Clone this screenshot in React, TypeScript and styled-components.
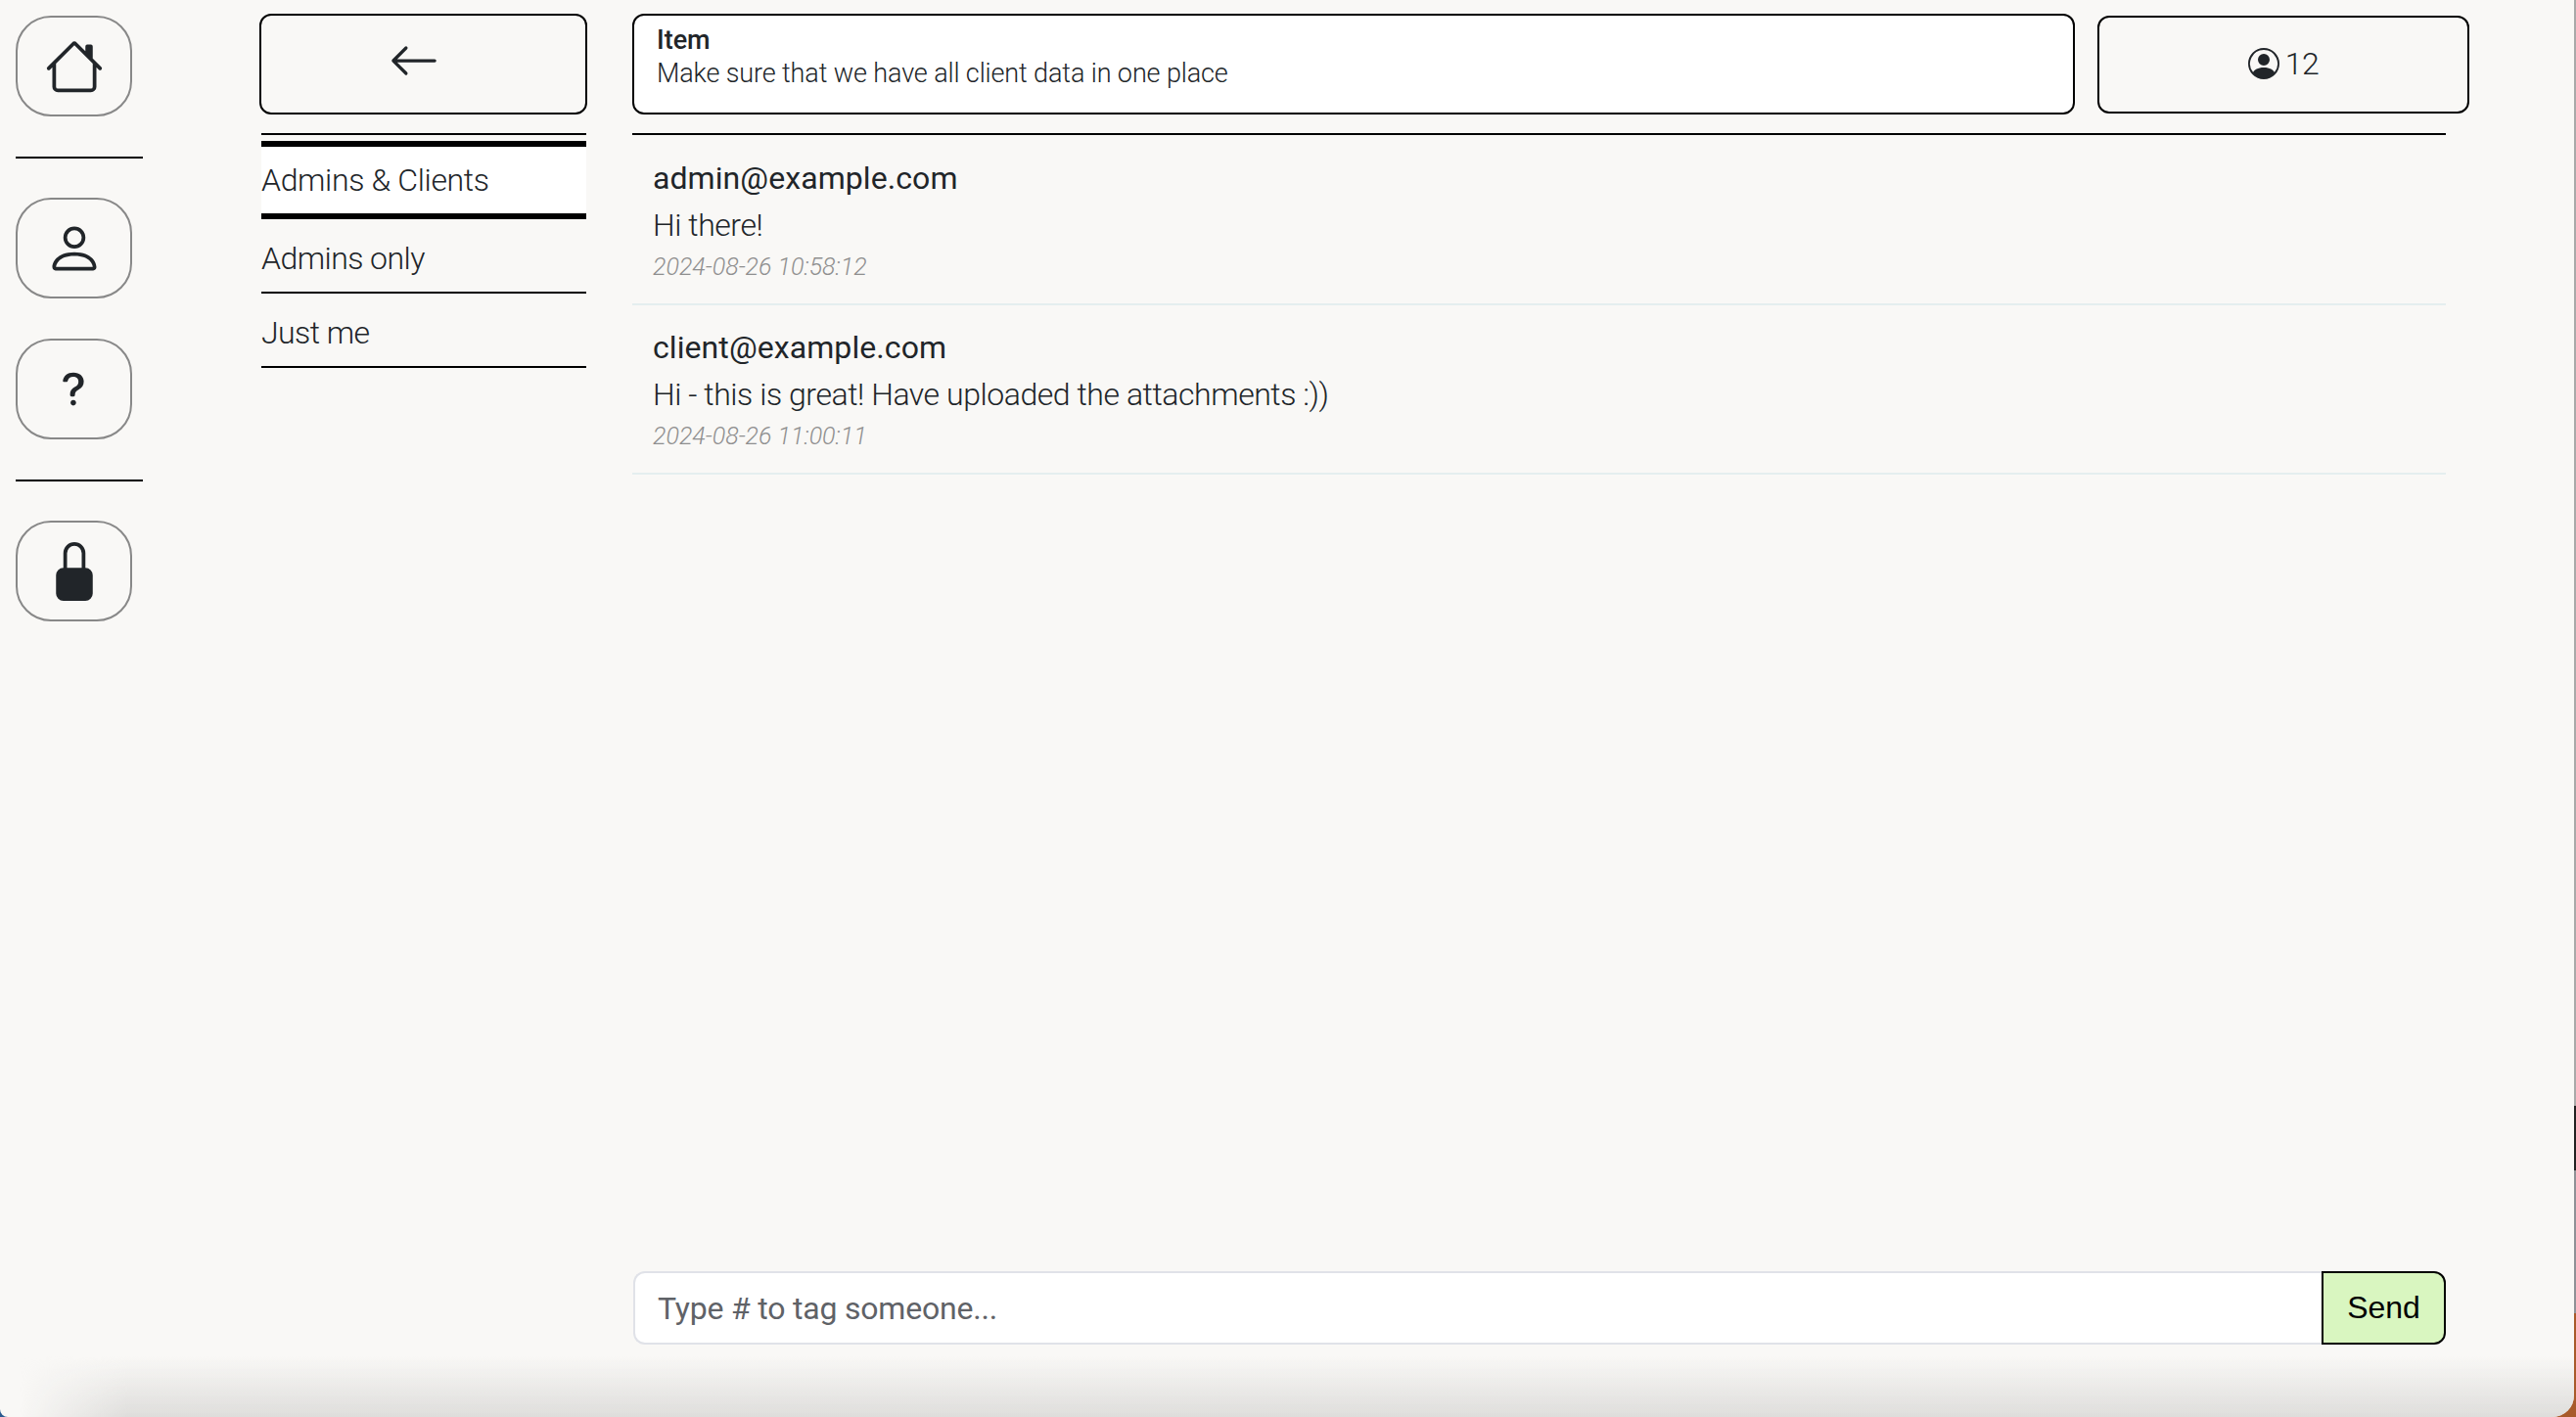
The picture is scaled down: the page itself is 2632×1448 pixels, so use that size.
import React from "react";
import styled, { createGlobalStyle } from "styled-components";

const GlobalStyle = createGlobalStyle`
  html, body {
    margin: 0;
    padding: 0;
    height: 100%;
    overflow: hidden;
  }
  * {
    box-sizing: border-box;
  }
  body {
    font-family: Roboto, "Liberation Sans", sans-serif;
    color: #212529;
  }
`;

const Desktop = styled.div`
  height: 1448px;
  width: 2632px;
  padding-right: 2px;
  background:
    linear-gradient(
        #a9a9a9 0,
        #a9a9a9 1130px,
        #222 1130px,
        #222 1196px,
        #8f9196 1196px,
        #8f9196 1342px,
        #a85a2a 1342px
      )
      right / 2px 100% no-repeat,
    linear-gradient(90deg, #2a5a90 50%, #a85a2a 50%);
`;

const Window = styled.div`
  position: relative;
  display: flex;
  height: 100%;
  overflow: hidden;
  background: #f9f8f6;
  border-radius: 0 0 22px 8px;
`;

const BottomShade = styled.div`
  position: absolute;
  left: 0;
  right: 0;
  bottom: 0;
  height: 62px;
  background: linear-gradient(rgba(222, 221, 219, 0), #dedddb);
  -webkit-mask-image: linear-gradient(90deg, transparent 20px, #000 130px);
  mask-image: linear-gradient(90deg, transparent 20px, #000 130px);
  pointer-events: none;
`;

const Sidebar = styled.nav`
  width: 265px;
  flex-shrink: 0;
  padding: 16px 0 0 16px;
`;

const SideButton = styled.button`
  display: flex;
  align-items: center;
  justify-content: center;
  width: 119px;
  height: 103px;
  padding: 0;
  background: none;
  border: 2px solid #888;
  border-radius: 36px;
  color: #212529;
  & + & {
    margin-top: 41px;
  }
`;

const SideRule = styled.hr`
  width: 130px;
  height: 2px;
  margin: 41px 0 40px 0;
  background: #000;
  border: none;
`;

const ThreadColumn = styled.div`
  width: 335px;
  flex-shrink: 0;
  margin-right: 46px;
  padding-top: 14px;
`;

const BackButton = styled.button`
  display: flex;
  align-items: center;
  justify-content: center;
  width: 335px;
  height: 103px;
  padding: 0 20px 7px 0;
  background: none;
  border: 2px solid #000;
  border-radius: 12px;
  color: #212529;
`;

const Tabs = styled.ul`
  list-style: none;
  margin: 19px 1px 0 2px;
  padding: 6px 0 0;
  border-top: 2px solid #000;
`;

const Tab = styled.li<{ $active?: boolean }>`
  display: flex;
  align-items: center;
  font-size: 32px;
  font-weight: 300;
  ${(p) =>
    p.$active
      ? `
    height: 80px;
    background: #fff;
    border-top: 6px solid #000;
    border-bottom: 6px solid #000;
    letter-spacing: -0.35px;
  `
      : `
    height: 76px;
    padding-top: 6px;
    border-bottom: 2px solid #000;
    letter-spacing: -0.55px;
  `}
`;

const ChatColumn = styled.main`
  display: flex;
  flex-direction: column;
  width: 1877px;
  padding: 14px 0 74px;
`;

const ChatHeader = styled.header`
  display: flex;
  align-items: flex-start;
  gap: 23px;
`;

const ItemCard = styled.div`
  width: 1474px;
  height: 103px;
  padding: 8px 23px;
  background: #fff;
  border: 2px solid #000;
  border-radius: 12px;
`;

const ItemLabel = styled.div`
  font-size: 27px;
  line-height: 34px;
  font-weight: 500;
`;

const ItemText = styled.div`
  font-size: 27px;
  line-height: 34px;
  font-weight: 300;
  letter-spacing: -0.12px;
`;

const CountBox = styled.div`
  display: flex;
  align-items: center;
  justify-content: center;
  gap: 6px;
  width: 380px;
  height: 100px;
  margin-top: 2px;
  padding-bottom: 2px;
  border: 2px solid #000;
  border-radius: 12px;
  font-size: 32px;
  font-weight: 300;
  letter-spacing: -0.5px;
`;

const Feed = styled.section`
  flex: 1;
  margin: 19px 24px 0 0;
  border-top: 2px solid #000;
`;

const Message = styled.article`
  padding: 23.5px 21px 22px;
  border-bottom: 2px solid #e4eeef;
`;

const Author = styled.div`
  font-size: 32px;
  line-height: 40px;
  font-weight: 400;
  letter-spacing: 0.08px;
`;

const Body = styled.div`
  margin-top: 8px;
  font-size: 32px;
  line-height: 40px;
  font-weight: 300;
  letter-spacing: -0.45px;
`;

const Stamp = styled.div`
  margin-top: 8px;
  font-size: 25px;
  line-height: 30px;
  font-weight: 300;
  font-style: italic;
  color: #8f8f8f;
`;

const Composer = styled.form`
  display: flex;
  height: 75px;
  margin: 0 24px 0 1px;
`;

const ComposerInput = styled.input`
  flex: 1;
  min-width: 0;
  padding: 0 23px;
  background: #fff;
  border: 2px solid #e0e2e8;
  border-right: none;
  border-radius: 12px 0 0 12px;
  outline: none;
  font-family: inherit;
  font-size: 32px;
  letter-spacing: -0.2px;
  &::placeholder {
    color: #5f6267;
    opacity: 1;
  }
`;

const SendButton = styled.button`
  width: 127px;
  padding: 0;
  background: #d9f6c0;
  border: 2px solid #000;
  border-radius: 0 12px 12px 0;
  color: #000;
  font-family: "Liberation Sans", Arial, sans-serif;
  font-size: 32px;
`;

const Icon = ({ d, size }: { d: string; size: number }) => (
  <svg width={size} height={size} viewBox="0 0 16 16" fill="currentColor">
    <path fillRule="evenodd" d={d} />
  </svg>
);

const icons = {
  house:
    "M8.707 1.5a1 1 0 0 0-1.414 0L.646 8.146a.5.5 0 0 0 .708.708L2 8.207V13.5A1.5 1.5 0 0 0 3.5 15h9a1.5 1.5 0 0 0 1.5-1.5V8.207l.646.647a.5.5 0 0 0 .708-.708L13 5.793V2.5a.5.5 0 0 0-.5-.5h-1a.5.5 0 0 0-.5.5v1.293zM13 7.207V13.5a.5.5 0 0 1-.5.5h-9a.5.5 0 0 1-.5-.5V7.207l5-5z",
  person:
    "M8 8a3 3 0 1 0 0-6 3 3 0 0 0 0 6m2-3a2 2 0 1 1-4 0 2 2 0 0 1 4 0m4 8c0 1-1 1-1 1H3s-1 0-1-1 1-4 6-4 6 3 6 4m-1-.004c-.001-.246-.154-.986-.832-1.664C11.516 10.68 10.289 10 8 10s-3.516.68-4.168 1.332c-.678.678-.83 1.418-.832 1.664z",
  question:
    "M4.475 5.458c-.284 0-.514-.237-.47-.517C4.28 3.24 5.576 2 7.825 2c2.25 0 3.767 1.36 3.767 3.215 0 1.344-.665 2.288-1.79 2.973-1.1.659-1.414 1.118-1.414 2.01v.03a.5.5 0 0 1-.5.5h-.77a.5.5 0 0 1-.5-.495l-.003-.2c-.043-1.221.477-2.001 1.645-2.712 1.03-.632 1.397-1.135 1.397-2.028 0-.979-.758-1.698-1.926-1.698-1.009 0-1.71.529-1.938 1.402-.066.254-.278.461-.54.461h-.777ZM7.794 14c.57 0 1.001-.44 1.001-1.006 0-.566-.43-1.005-1-1.005-.585 0-1.016.44-1.016 1.005 0 .566.43 1.006 1.015 1.006",
  lock:
    "M8 1a2 2 0 0 1 2 2v4H6V3a2 2 0 0 1 2-2m3 6V3a3 3 0 0 0-6 0v4a2 2 0 0 0-2 2v5a2 2 0 0 0 2 2h6a2 2 0 0 0 2-2V9a2 2 0 0 0-2-2",
  arrowLeft:
    "M15 8a.5.5 0 0 0-.5-.5H2.707l3.147-3.146a.5.5 0 1 0-.708-.708l-4 4a.5.5 0 0 0 0 .708l4 4a.5.5 0 0 0 .708-.708L2.707 8.5H14.5A.5.5 0 0 0 15 8",
  personCircle:
    "M11 6a3 3 0 1 1-6 0 3 3 0 0 1 6 0M0 8a8 8 0 1 1 16 0A8 8 0 0 1 0 8m8-7a7 7 0 0 0-5.468 11.37C3.242 11.226 4.805 10 8 10s4.757 1.225 5.468 2.37A7 7 0 0 0 8 1",
};

const messages = [
  {
    author: "admin@example.com",
    body: "Hi there!",
    stamp: "2024-08-26 10:58:12",
  },
  {
    author: "client@example.com",
    body: "Hi - this is great! Have uploaded the attachments :))",
    stamp: "2024-08-26 11:00:11",
  },
];

function App() {
  return (
    <Desktop>
      <GlobalStyle />
      <Window>
        <Sidebar>
          <SideButton>
            <Icon d={icons.house} size={60} />
          </SideButton>
          <SideRule />
          <SideButton>
            <Icon d={icons.person} size={60} />
          </SideButton>
          <SideButton>
            <Icon d={icons.question} size={45} />
          </SideButton>
          <SideRule />
          <SideButton>
            <Icon d={icons.lock} size={60} />
          </SideButton>
        </Sidebar>

        <ThreadColumn>
          <BackButton>
            <Icon d={icons.arrowLeft} size={52} />
          </BackButton>
          <Tabs>
            <Tab $active>Admins &amp; Clients</Tab>
            <Tab>Admins only</Tab>
            <Tab>Just me</Tab>
          </Tabs>
        </ThreadColumn>

        <ChatColumn>
          <ChatHeader>
            <ItemCard>
              <ItemLabel>Item</ItemLabel>
              <ItemText>Make sure that we have all client data in one place</ItemText>
            </ItemCard>
            <CountBox>
              <Icon d={icons.personCircle} size={32} />
              12
            </CountBox>
          </ChatHeader>
          <Feed>
            {messages.map((m) => (
              <Message key={m.stamp}>
                <Author>{m.author}</Author>
                <Body>{m.body}</Body>
                <Stamp>{m.stamp}</Stamp>
              </Message>
            ))}
          </Feed>
          <Composer onSubmit={(e) => e.preventDefault()}>
            <ComposerInput placeholder="Type # to tag someone..." />
            <SendButton>Send</SendButton>
          </Composer>
        </ChatColumn>

        <BottomShade />
      </Window>
    </Desktop>
  );
}

export default App;
